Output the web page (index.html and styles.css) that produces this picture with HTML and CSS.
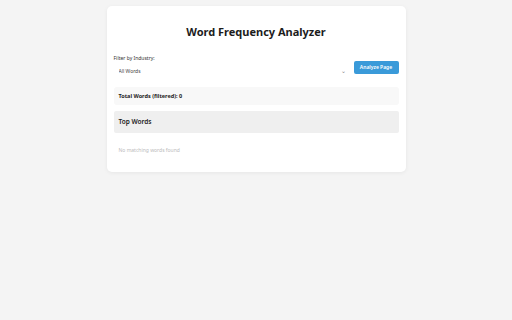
FILE: index.html
```html
<!DOCTYPE html>
<html lang="en">
<head>
<meta charset="utf-8">
<title>Word Frequency Analyzer</title>
<link rel="stylesheet" href="styles.css">
</head>
<body>
<div class="card">
  <h1 class="title">Word Frequency Analyzer</h1>
  <div class="controls">
    <div class="filter">
      <label class="filter-label" for="industry">Filter by Industry:</label>
      <div class="select-wrap">
        <select id="industry" class="select">
          <option>All Words</option>
        </select>
        <span class="select-arrow">&#8964;</span>
      </div>
    </div>
    <button class="analyze-btn">Analyze Page</button>
  </div>
  <div class="total">Total Words (filtered): 0</div>
  <div class="top-header">Top Words</div>
  <div class="empty">No matching words found</div>
</div>
</body>
</html>
```

FILE: styles.css
```css
html, body {
  margin: 0;
  padding: 0;
}
body {
  background: #f4f4f4;
  font-family: "Noto Sans", "Open Sans", sans-serif;
  color: #222;
  height: 320px;
}
.card {
  box-sizing: border-box;
  width: 299px;
  margin: 6px auto 0;
  padding: 17px 7px 18px;
  background: #ffffff;
  border-radius: 5px;
  box-shadow: 0 1px 4px rgba(0, 0, 0, 0.06);
}
.title {
  margin: 0;
  text-align: center;
  font-size: 11px;
  line-height: 18px;
  font-weight: 700;
  color: #1c1c1c;
}
.controls {
  display: flex;
  align-items: center;
  gap: 5px;
  margin-top: 14px;
}
.filter {
  flex: 1;
  display: flex;
  flex-direction: column;
  gap: 2px;
}
.filter-label {
  display: block;
  height: 7px;
  font-size: 5px;
  line-height: 7px;
  color: #333;
}
.select-wrap {
  position: relative;
  height: 15px;
}
.select {
  -webkit-appearance: none;
  appearance: none;
  display: block;
  box-sizing: border-box;
  width: 100%;
  height: 15px;
  margin: 0;
  border: none;
  background: #fff;
  padding: 0 5px;
  font-family: inherit;
  font-size: 5px;
  line-height: 15px;
  color: #444;
  outline: none;
}
.select-arrow {
  position: absolute;
  right: 3px;
  top: 3px;
  font-size: 6px;
  line-height: 8px;
  color: #888;
}
.analyze-btn {
  width: 45px;
  height: 13px;
  padding: 0;
  border: none;
  border-radius: 2px;
  background: #3a9ad9;
  color: #fff;
  font-family: inherit;
  font-size: 5px;
  font-weight: 600;
}
.total {
  margin-top: 8px;
  height: 18px;
  line-height: 18px;
  padding: 0 5px;
  background: #f8f8f8;
  border-radius: 3px;
  font-size: 5.5px;
  font-weight: 700;
  color: #222;
}
.top-header {
  margin-top: 6px;
  height: 22px;
  line-height: 22px;
  padding: 0 5px;
  background: #efefef;
  border-radius: 2px;
  font-size: 6.5px;
  font-weight: 600;
  color: #222;
}
.empty {
  margin-top: 13px;
  padding: 0 5px;
  font-size: 5px;
  line-height: 8px;
  color: #bbbbbb;
}
```
